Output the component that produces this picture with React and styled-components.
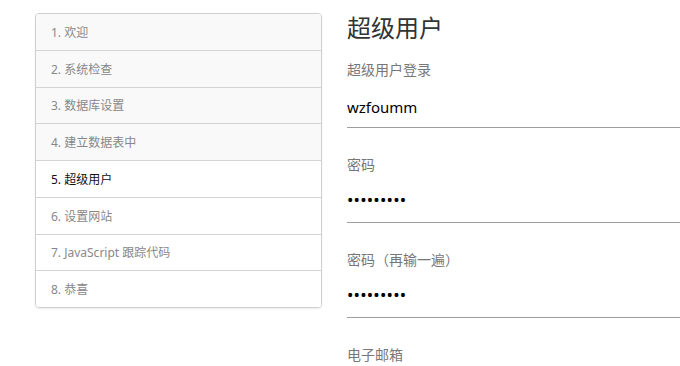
import React from 'react';
import styled, { createGlobalStyle } from 'styled-components';

const GlobalStyle = createGlobalStyle`
    html, body {
        margin: 0;
        padding: 0;
        background: #fff;
        overflow: hidden;
    }

    body {
        font-family: 'Noto Sans', 'Noto Sans CJK SC', sans-serif;
        color: #333;
    }
`;

const steps = [
    { label: '1. 欢迎', done: true },
    { label: '2. 系统检查', done: true },
    { label: '3. 数据库设置', done: true },
    { label: '4. 建立数据表中', done: true },
    { label: '5. 超级用户', active: true },
    { label: '6. 设置网站' },
    { label: '7. JavaScript 跟踪代码' },
    { label: '8. 恭喜' },
];

const fields = [
    { label: '超级用户登录', type: 'text', value: 'wzfoumm' },
    { label: '密码', type: 'password', value: '123456789' },
    { label: '密码（再输一遍）', type: 'password', value: '123456789' },
    { label: '电子邮箱', type: 'email', value: '' },
];

const App = () => {
    return (
        <>
            <GlobalStyle />
            <Page>
                <StepList>
                    {steps.map((step) => (
                        <Step key={step.label} $done={step.done} $active={step.active}>
                            {step.label}
                        </Step>
                    ))}
                </StepList>
                <Content>
                    <Title>超级用户</Title>
                    {fields.map((field) => (
                        <Field key={field.label}>
                            <Label>{field.label}</Label>
                            <Input
                                type={field.type}
                                defaultValue={field.value}
                                $masked={field.type === 'password'}
                                readOnly
                            />
                        </Field>
                    ))}
                </Content>
            </Page>
        </>
    );
};

const Page = styled.main`
    display: flex;
    align-items: flex-start;
    gap: 25px;
    padding: 13px 0 0 35px;
`;

const StepList = styled.ul`
    flex: 0 0 287px;
    box-sizing: border-box;
    margin: 0;
    padding: 0;
    list-style: none;
    border: 1px solid #cfcfcf;
    border-radius: 4px;
    box-shadow: 0 1px 2px rgba(0, 0, 0, 0.08);
    overflow: hidden;
`;

const Step = styled.li`
    height: 35.75px;
    box-sizing: content-box;
    display: flex;
    align-items: center;
    padding: 0 15px;
    font-size: 12px;
    background: ${(p) => (p.$done ? '#f9f9f9' : '#fff')};
    color: ${(p) => (p.$active ? '#111' : '#888')};

    & + & {
        border-top: 1px solid #d4d4d4;
    }
`;

const Content = styled.section`
    flex: 1;
    min-width: 0;
`;

const Title = styled.h1`
    margin: 0 0 17px;
    font-size: 24px;
    line-height: 30px;
    font-weight: 400;
    color: #333;
`;

const Field = styled.div`
    margin-bottom: 27px;
`;

const Label = styled.label`
    display: block;
    font-size: 14px;
    line-height: 20px;
    color: #777;
`;

const Input = styled.input`
    display: block;
    width: 100%;
    box-sizing: border-box;
    height: 48px;
    margin: 0;
    padding: ${(p) => (p.$masked ? '12px 0 10px' : '14px 0 8px')};
    border: none;
    border-bottom: 1px solid #9e9e9e;
    outline: none;
    background: transparent;
    font-family: 'Noto Sans', 'Noto Sans CJK SC', sans-serif;
    font-size: ${(p) => (p.$masked ? '17px' : '15px')};
    letter-spacing: ${(p) => (p.$masked ? '0.2px' : '0')};
    color: #000;
`;

export default App;
